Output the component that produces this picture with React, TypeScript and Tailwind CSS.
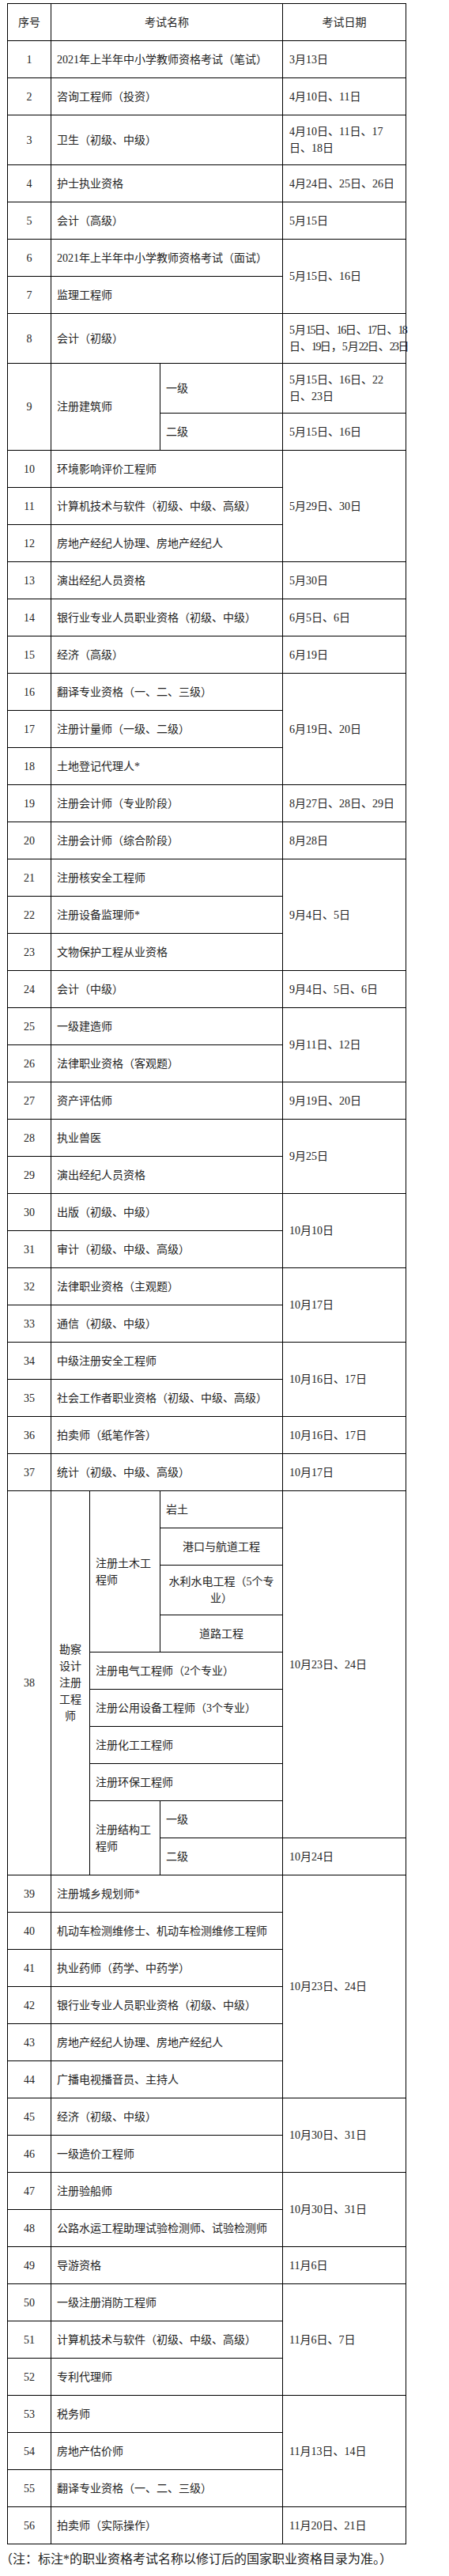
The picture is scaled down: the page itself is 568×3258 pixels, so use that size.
import React from "react";

const seqC = "border border-black align-middle text-center p-0";
const nameC = "border border-black align-middle text-left pl-[7px] pr-[2px] py-0 whitespace-nowrap";
const dateC = "border border-black align-middle text-left pl-[8px] pr-[2px] py-0 whitespace-nowrap";
const midC = "border border-black align-middle text-center px-[2px] py-0 whitespace-nowrap";

type R = { n: number; name: string; date?: string; span?: number };

function Row({ n, name, date, span }: R) {
  return (
    <tr className="h-[47px]">
      <td className={seqC}>{n}</td>
      <td className={nameC} colSpan={3}>
        {name}
      </td>
      {date !== undefined && (
        <td className={dateC} rowSpan={span ?? 1}>
          {date}
        </td>
      )}
    </tr>
  );
}

function T({ children }: { children: React.ReactNode }) {
  return <span className="tracking-[-1.6px]">{children}</span>;
}

const block1: R[] = [
  { n: 10, name: "环境影响评价工程师", date: "5月29日、30日", span: 3 },
  { n: 11, name: "计算机技术与软件（初级、中级、高级）" },
  { n: 12, name: "房地产经纪人协理、房地产经纪人" },
  { n: 13, name: "演出经纪人员资格", date: "5月30日" },
  { n: 14, name: "银行业专业人员职业资格（初级、中级）", date: "6月5日、6日" },
  { n: 15, name: "经济（高级）", date: "6月19日" },
  { n: 16, name: "翻译专业资格（一、二、三级）", date: "6月19日、20日", span: 3 },
  { n: 17, name: "注册计量师（一级、二级）" },
  { n: 18, name: "土地登记代理人*" },
  { n: 19, name: "注册会计师（专业阶段）", date: "8月27日、28日、29日" },
  { n: 20, name: "注册会计师（综合阶段）", date: "8月28日" },
  { n: 21, name: "注册核安全工程师", date: "9月4日、5日", span: 3 },
  { n: 22, name: "注册设备监理师*" },
  { n: 23, name: "文物保护工程从业资格" },
  { n: 24, name: "会计（中级）", date: "9月4日、5日、6日" },
  { n: 25, name: "一级建造师", date: "9月11日、12日", span: 2 },
  { n: 26, name: "法律职业资格（客观题）" },
  { n: 27, name: "资产评估师", date: "9月19日、20日" },
  { n: 28, name: "执业兽医", date: "9月25日", span: 2 },
  { n: 29, name: "演出经纪人员资格" },
  { n: 30, name: "出版（初级、中级）", date: "10月10日", span: 2 },
  { n: 31, name: "审计（初级、中级、高级）" },
  { n: 32, name: "法律职业资格（主观题）", date: "10月17日", span: 2 },
  { n: 33, name: "通信（初级、中级）" },
  { n: 34, name: "中级注册安全工程师", date: "10月16日、17日", span: 2 },
  { n: 35, name: "社会工作者职业资格（初级、中级、高级）" },
  { n: 36, name: "拍卖师（纸笔作答）", date: "10月16日、17日" },
  { n: 37, name: "统计（初级、中级、高级）", date: "10月17日" },
];

const block2: R[] = [
  { n: 39, name: "注册城乡规划师*", date: "10月23日、24日", span: 6 },
  { n: 40, name: "机动车检测维修士、机动车检测维修工程师" },
  { n: 41, name: "执业药师（药学、中药学）" },
  { n: 42, name: "银行业专业人员职业资格（初级、中级）" },
  { n: 43, name: "房地产经纪人协理、房地产经纪人" },
  { n: 44, name: "广播电视播音员、主持人" },
  { n: 45, name: "经济（初级、中级）", date: "10月30日、31日", span: 2 },
  { n: 46, name: "一级造价工程师" },
  { n: 47, name: "注册验船师", date: "10月30日、31日", span: 2 },
  { n: 48, name: "公路水运工程助理试验检测师、试验检测师" },
  { n: 49, name: "导游资格", date: "11月6日" },
  { n: 50, name: "一级注册消防工程师", date: "11月6日、7日", span: 3 },
  { n: 51, name: "计算机技术与软件（初级、中级、高级）" },
  { n: 52, name: "专利代理师" },
  { n: 53, name: "税务师", date: "11月13日、14日", span: 3 },
  { n: 54, name: "房地产估价师" },
  { n: 55, name: "翻译专业资格（一、二、三级）" },
  { n: 56, name: "拍卖师（实际操作）", date: "11月20日、21日" },
];

export default function App() {
  return (
    <div className="bg-white w-[568px] min-h-[3258px] pl-[9px] pt-[4px] text-[#222] font-['Liberation_Serif','Noto_Sans_CJK_SC',serif]">
      <table className="table-fixed border-collapse w-[505px] text-[14px] leading-[21px]">
        <colgroup>
          <col className="w-[55px]" />
          <col className="w-[49px]" />
          <col className="w-[89px]" />
          <col className="w-[155px]" />
          <col />
        </colgroup>
        <tbody>
          <tr className="h-[47px]">
            <td className={seqC}>序号</td>
            <td className={midC} colSpan={3}>
              考试名称
            </td>
            <td className={midC}>考试日期</td>
          </tr>
          <Row n={1} name="2021年上半年中小学教师资格考试（笔试）" date="3月13日" />
          <Row n={2} name="咨询工程师（投资）" date="4月10日、11日" />
          <tr className="h-[63px]">
            <td className={seqC}>3</td>
            <td className={nameC} colSpan={3}>
              卫生（初级、中级）
            </td>
            <td className={dateC}>
              4月10日、11日、17
              <br />
              日、18日
            </td>
          </tr>
          <Row n={4} name="护士执业资格" date="4月24日、25日、26日" />
          <Row n={5} name="会计（高级）" date="5月15日" />
          <Row n={6} name="2021年上半年中小学教师资格考试（面试）" date="5月15日、16日" span={2} />
          <Row n={7} name="监理工程师" />
          <tr className="h-[63px]">
            <td className={seqC}>8</td>
            <td className={nameC} colSpan={3}>
              会计（初级）
            </td>
            <td className={dateC}>
              5月<T>15</T>日、<T>16</T>日、<T>17</T>日、<T>18</T>
              <br />
              日、<T>19</T>日，5月<T>22</T>日、<T>23</T>日
            </td>
          </tr>
          <tr className="h-[63px]">
            <td className={seqC} rowSpan={2}>
              9
            </td>
            <td className={nameC} colSpan={2} rowSpan={2}>
              注册建筑师
            </td>
            <td className={nameC}>一级</td>
            <td className={dateC}>
              5月15日、16日、22
              <br />
              日、23日
            </td>
          </tr>
          <tr className="h-[47px]">
            <td className={nameC}>二级</td>
            <td className={dateC}>5月15日、16日</td>
          </tr>
          {block1.map((r) => (
            <Row key={r.n} {...r} />
          ))}
          <tr className="h-[47px]">
            <td className={seqC} rowSpan={10}>
              38
            </td>
            <td className={midC} rowSpan={10}>
              勘察
              <br />
              设计
              <br />
              注册
              <br />
              工程
              <br />师
            </td>
            <td className={nameC} rowSpan={4}>
              注册土木工
              <br />
              程师
            </td>
            <td className={nameC}>岩土</td>
            <td className={dateC} rowSpan={9}>
              10月23日、24日
            </td>
          </tr>
          <tr className="h-[47px]">
            <td className={midC}>港口与航道工程</td>
          </tr>
          <tr className="h-[63px]">
            <td className={midC}>
              水利水电工程（5个专
              <br />
              业）
            </td>
          </tr>
          <tr className="h-[47px]">
            <td className={midC}>道路工程</td>
          </tr>
          <tr className="h-[47px]">
            <td className={nameC} colSpan={2}>
              注册电气工程师（2个专业）
            </td>
          </tr>
          <tr className="h-[47px]">
            <td className={nameC} colSpan={2}>
              注册公用设备工程师（3个专业）
            </td>
          </tr>
          <tr className="h-[47px]">
            <td className={nameC} colSpan={2}>
              注册化工工程师
            </td>
          </tr>
          <tr className="h-[47px]">
            <td className={nameC} colSpan={2}>
              注册环保工程师
            </td>
          </tr>
          <tr className="h-[47px]">
            <td className={nameC} rowSpan={2}>
              注册结构工
              <br />
              程师
            </td>
            <td className={nameC}>一级</td>
          </tr>
          <tr className="h-[47px]">
            <td className={nameC}>二级</td>
            <td className={dateC}>10月24日</td>
          </tr>
          {block2.map((r) => (
            <Row key={r.n} {...r} />
          ))}
        </tbody>
      </table>
      <p className="-ml-[9px] mt-[9px] text-[16px] leading-[20px] whitespace-nowrap">
        （注：标注*的职业资格考试名称以修订后的国家职业资格目录为准。）
      </p>
    </div>
  );
}
